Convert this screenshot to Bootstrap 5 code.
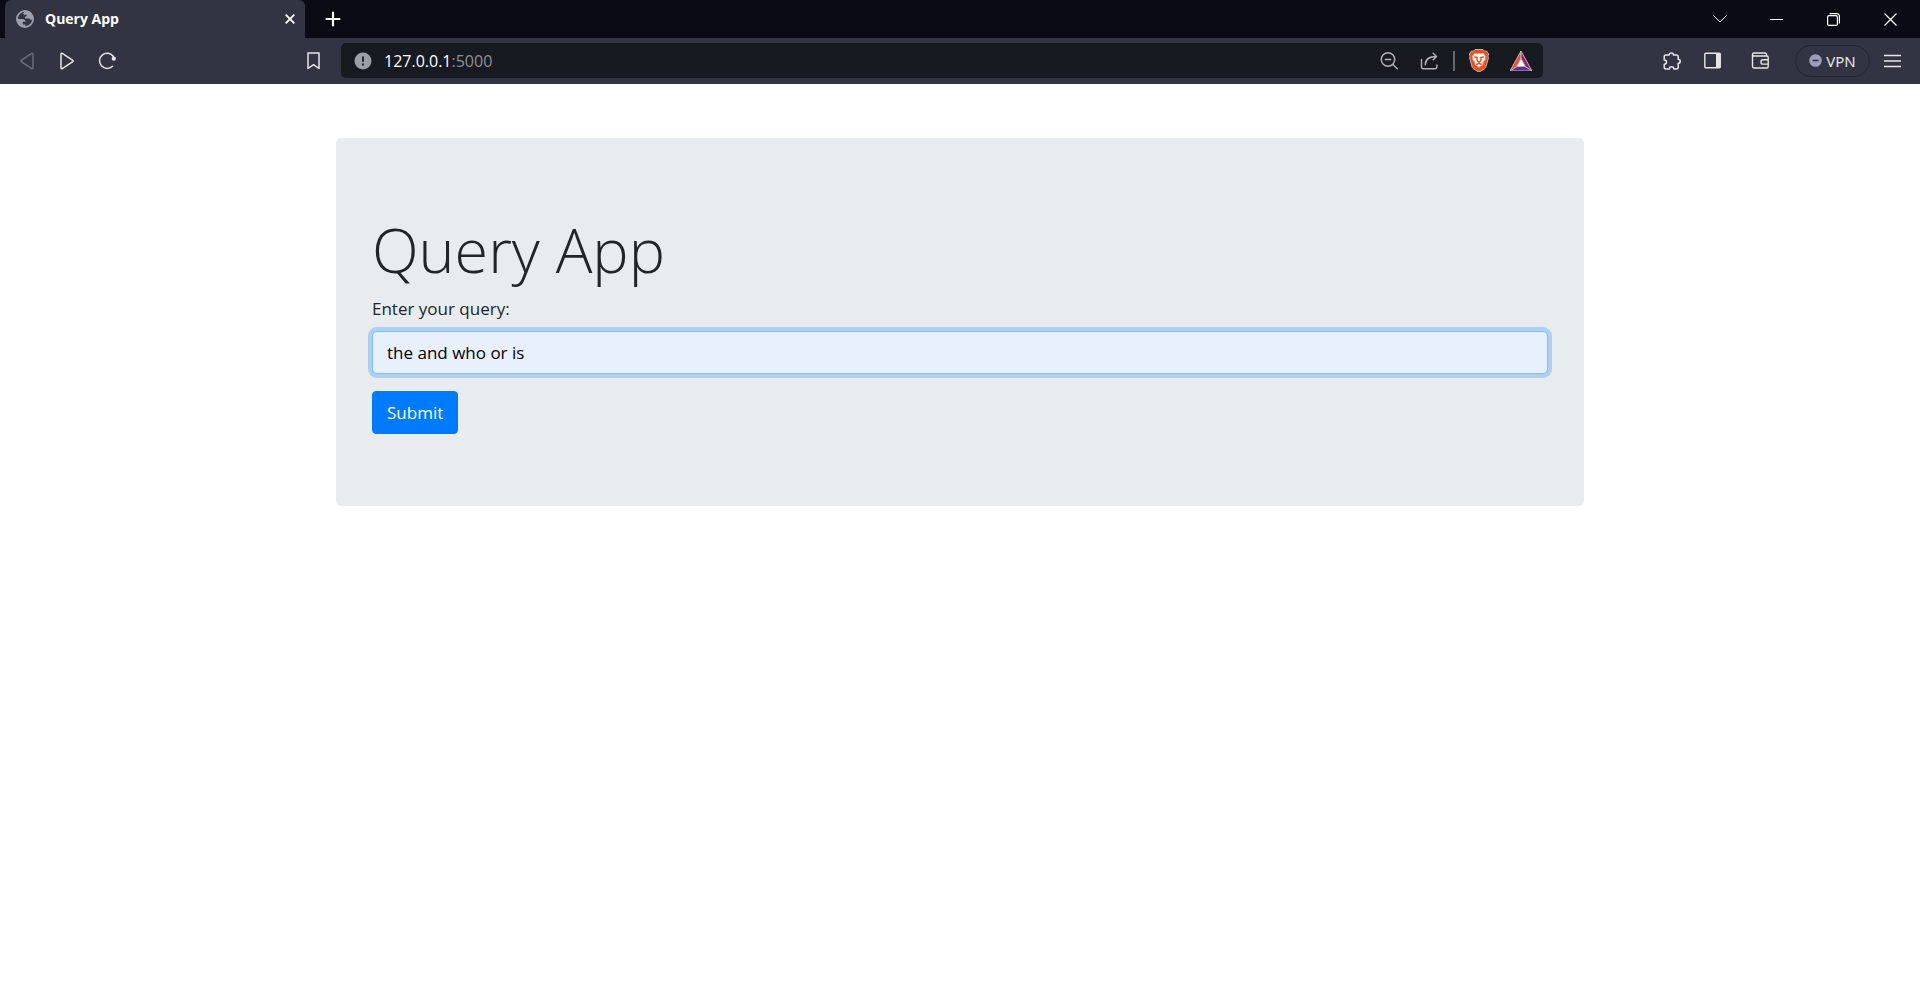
<!DOCTYPE html>
<html lang="en">
<head>
<meta charset="utf-8">
<meta name="viewport" content="width=device-width, initial-scale=1">
<title>Query App</title>
<link href="https://cdn.jsdelivr.net/npm/bootstrap@5.3.0/dist/css/bootstrap.min.css" rel="stylesheet">
<style>
  body { font-family: "Open Sans", "Noto Sans", sans-serif; color: #212529; background: #fff; }
  svg { display: block; flex: none; fill: none; stroke: currentColor; }
  .tab-strip { height: 38px; background: #0a0b14; color: #fff; padding: 0 1px 0 5px; }
  .page-tab { width: 300px; height: 38px; background: #323443; border-radius: 6px 6px 0 0; padding: 0 4px 0 11px; font: 700 14px/20px "Open Sans", sans-serif; }
  .tab-title { margin-left: 11px; }
  .toolbar { height: 46px; background: #323443; color: #e6e6e8; padding: 0 8px 1px 7px; }
  .tool-btn, .win-btn { border: 0; padding: 0; background: none; color: inherit; display: flex; align-items: center; justify-content: center; flex: none; }
  .tool-btn { width: 40px; height: 32px; }
  .tool-btn.close-tab { width: 22px; }
  .tool-btn.wide { width: 42px; }
  .tool-btn:disabled { color: #6d6f7c; }
  .win-btn { width: 57px; height: 38px; }
  .nav-tools { width: 334px; }
  .side-tools { width: 369px; }
  .address { height: 35px; background: #181a21; border-radius: 5px; padding: 0 1px 0 13px; color: #b4b5b8; }
  .address-text { font: 16px/24px "Open Sans", sans-serif; color: #8e9095; }
  .address-text b { font-weight: 400; color: #fff; }
  .divider { width: 2px; height: 20px; background: #66686d; margin: 0 3px 0 4px; }
  .vpn { width: 75px; height: 32px; border: 1px solid #232532; border-radius: 16px; background: none; color: #e6e6e8; font: 15px/20px "Noto Sans", sans-serif; padding: 0; margin: 0 2px 0 15px; }
  .page-box { max-width: 1248px; margin: 54px auto 0; padding: 72px 36px; border-radius: 5px; background: #e9ecef; font-size: 17px; line-height: 27px; }
  .page-box h1 { font-size: 61px; line-height: 80px; font-weight: 300; margin-bottom: 5px; }
  .page-box label { margin-bottom: 9px; display: block; }
  .page-box .form-control { height: 43px; padding: 6px 14px; font-size: 17px; line-height: 27px; border-radius: 5px; color: #000; background: #e8f0fe; border-color: #80bdff; box-shadow: 0 0 0 4px rgba(0,123,255,.25); margin-bottom: 17px; }
  .page-box .btn { height: 43px; padding: 6px 14px; font-size: 17px; line-height: 27px; border-radius: 4px; --bs-btn-bg: #007bff; --bs-btn-border-color: #007bff; display: block; }
</style>
</head>
<body>
<header>
  <div class="tab-strip d-flex align-items-center">
    <div class="page-tab d-flex align-items-center">
      <svg width="18" height="18" viewBox="0 0 18 18"><circle cx="9" cy="9" r="8.100" stroke="#9c9eaa" stroke-width="1.800"/><path d="M8.700 1.500Q7.200 2.300 7.200 4q0 .8 1.300.8h2.300q0 1.900-1.800 2v1.700h3.800q1.700 0 1.900 1.800l2.200-1.200Q17.500 3 12 .8zM.8 9h5.500q3 .1 3.200 2.800H6.800v2.600h2.700v2.800Q1 17 .8 9z" fill="#9c9eaa" stroke="none"/></svg>
      <span class="tab-title flex-grow-1">Query App</span>
      <button class="tool-btn close-tab" aria-label="Close tab"><svg width="10" height="10" viewBox="0 0 10 10" stroke-width="1.800"><path d="M.7.7l8.600 8.600M9.300.7L.7 9.300"/></svg></button>
    </div>
    <button class="tool-btn ms-2" aria-label="New tab"><svg width="16" height="16" viewBox="0 0 16 16" stroke-width="2.200" stroke-linecap="round"><path d="M8 1.500v13M1.500 8h13"/></svg></button>
    <div class="d-flex ms-auto">
      <button class="win-btn" aria-label="Search tabs"><svg width="14" height="8" viewBox="0 0 14 8"><path d="M.5.5L7 7 13.500.5"/></svg></button>
      <button class="win-btn" aria-label="Minimize"><svg width="13" height="1" viewBox="0 0 13 1"><path d="M0 .5h13"/></svg></button>
      <button class="win-btn" aria-label="Restore"><svg width="13" height="13" viewBox="0 0 13 13" stroke-width="1.200"><rect x=".6" y="2.600" width="9.800" height="9.800" rx="1.500"/><path d="M2.600.6H10A2.400 2.400 0 0 1 12.400 3v7.400"/></svg></button>
      <button class="win-btn" aria-label="Close"><svg width="13" height="13" viewBox="0 0 13 13" stroke-width="1.200"><path d="M.5.5l12 12M12.500.5l-12 12"/></svg></button>
    </div>
  </div>
  <div class="toolbar d-flex align-items-center">
    <div class="nav-tools d-flex">
      <button class="tool-btn" disabled aria-label="Back"><svg width="14" height="18" viewBox="0 0 14 18" stroke-width="1.400" stroke-linejoin="round"><path d="M13 2v14a.8.8 0 0 1-1.300.6L1.200 9.600a.8.8 0 0 1 0-1.200l10.500-7A.8.8 0 0 1 13 2z"/></svg></button>
      <button class="tool-btn" aria-label="Forward"><svg width="14" height="18" viewBox="0 0 14 18" stroke-width="1.500" stroke-linejoin="round"><path d="M1 2v14a.8.8 0 0 0 1.300.6l10.500-7a.8.8 0 0 0 0-1.200l-10.500-7A.8.8 0 0 0 1 2z"/></svg></button>
      <button class="tool-btn" aria-label="Reload"><svg width="18" height="18" viewBox="0 0 18 18" stroke-width="1.500"><path d="M14.500 14.200A7.600 7.600 0 1 1 15.400 4.500l.7 1.500" stroke-linecap="round"/><circle cx="15.800" cy="6.700" r="2.100" fill="currentColor" stroke="none"/></svg></button>
      <button class="tool-btn ms-auto" aria-label="Bookmark"><svg width="13" height="18" viewBox="0 0 13 18" stroke-width="1.500"><path d="M1 1h11v15.500L6.500 12.700 1 16.500z" stroke-linejoin="round"/></svg></button>
      <span class="ps-2"></span>
    </div>
    <div class="address d-flex align-items-center flex-grow-1">
      <svg width="18" height="18" viewBox="0 0 18 18"><circle cx="9" cy="9" r="8.500" fill="#9c9ea7" stroke="none"/><path d="M9 4.500v5.300M9 11.500v2" stroke="#181a21" stroke-width="1.800"/></svg>
      <span class="address-text ms-2 ps-1 flex-grow-1"><b>127.0.0.1</b>:5000</span>
      <button class="tool-btn" aria-label="Zoom"><svg width="18" height="18" viewBox="0 0 18 18" stroke-width="1.400" stroke-linecap="round"><circle cx="8" cy="7.500" r="6.700"/><path d="M5.300 7.500h5.400M12.900 12.400l4.400 4.400"/></svg></button>
      <button class="tool-btn" aria-label="Share"><svg width="18" height="18" viewBox="0 0 18 18" stroke-width="1.400" stroke-linecap="round" stroke-linejoin="round"><path d="M1.500 7.500V15a1.700 1.700 0 0 0 1.700 1.700h12A1.700 1.700 0 0 0 16.900 15v-2M5.300 12.700c0-5.500 3-8.200 11-8.200M13.200 1.300l3.300 3.200-3.300 3.200"/></svg></button>
      <span class="divider"></span>
      <button class="tool-btn wide" aria-label="Brave Shields"><svg width="20" height="23" viewBox="0 0 20 23" stroke="none"><path d="M6 .5h8l1.500 1.700 2-.2L19.700 5l-.8 2 .5 2-2.600 9.300q-.5 1-1.500 1.700L11 22.600q-1 .6-2 0L4.700 20q-1-.7-1.500-1.700L.6 9l.5-2-.8-2 2.200-3 2 .2z" fill="#fb4a0c"/><path d="M5.500 4.300l2.800.6 1.700-.5 1.700.5 2.800-.6L16.600 7.500l-.6 1.500.2 1.600-2.300 3.200.1 1.800L10 18.300l-4-2.700.1-1.800-2.300-3.200L4 9l-.6-1.500z" fill="#fff"/><path d="M5.300 7.800l2.900.7-.3 1.700.6 1.800L10 13l1.500-1 .6-1.800-.3-1.700 2.900-.7M10 13v1.500M7.300 15.700l2.700-1.400 2.700 1.400" fill="none" stroke="#fb4a0c" stroke-width="1.400"/></svg></button>
      <button class="tool-btn wide" aria-label="Brave Rewards"><svg width="22" height="20" viewBox="0 0 22 20" stroke="none"><path d="M11 0L0 20l7-4.500L11 8z" fill="#ff4724"/><path d="M11 0v8l4 7.500 7 4.500z" fill="#9e1f63"/><path d="M0 20l7-4.500h8l7 4.500z" fill="#662d91"/><path d="M11 7.500l4.300 8H6.700z" fill="#fff"/></svg></button>
    </div>
    <div class="side-tools d-flex align-items-center justify-content-end">
      <button class="tool-btn" aria-label="Extensions"><svg width="18" height="18" viewBox="0 0 18 18" stroke-width="1.500" stroke-linejoin="round"><path d="M1.200 5Q1.200 3 3 3h3.200C6.200 1.700 7 .9 8.300.9s2.200.8 2.200 2.100h2.700q2 0 2 2v2.200c1.300 0 2 .9 2 2s-.7 2.100-2 2.100V15q0 2-2 2h-2.400c0-1.400-.9-2.200-2.200-2.200S6.400 15.600 6.400 17H3q-1.800 0-1.800-2v-2.800c1.400 0 2.300-.9 2.300-2.200s-.9-2.100-2.300-2.100z"/></svg></button>
      <button class="tool-btn" aria-label="Sidebar"><svg width="17" height="17" viewBox="0 0 17 17" stroke-width="1.400"><rect x=".8" y="1.300" width="15.400" height="14.400" rx="1"/><path d="M12 1h4.500v15H12z" fill="currentColor" stroke="none"/></svg></button>
      <button class="tool-btn ms-2" aria-label="Wallet"><svg width="18" height="17" viewBox="0 0 18 17" stroke-width="1.400" stroke-linejoin="round"><path d="M15.500 4V2.500Q15.500 1 14 1H3Q1.500 1 1.500 2.500v11.800Q1.500 16 3 16h12.800q1.400 0 1.400-1.500v-9q0-1.500-1.400-1.500H3Q1.500 4 1.500 2.500M17.200 7.700h-5.500q-1.700 0-1.700 2.200t1.700 2.200h5.500z"/></svg></button>
      <button class="vpn d-flex align-items-center justify-content-center gap-1"><svg width="13" height="13" viewBox="0 0 13 13"><circle cx="6.500" cy="6.500" r="6.300" fill="#9c9db8" stroke="none"/><path d="M3.500 6.500h6" stroke="#323443" stroke-width="1.600"/></svg>VPN</button>
      <button class="tool-btn" aria-label="Menu"><svg width="17" height="14" viewBox="0 0 17 14" stroke-width="1.400"><path d="M0 1.500h17M0 7h17M0 12.500h17"/></svg></button>
    </div>
  </div>
</header>
<main class="page-box">
  <h1>Query App</h1>
  <form>
    <label for="query">Enter your query:</label>
    <input class="form-control" type="text" id="query" value="the and who or is">
    <button class="btn btn-primary" type="submit">Submit</button>
  </form>
</main>
<script src="https://cdn.jsdelivr.net/npm/bootstrap@5.3.0/dist/js/bootstrap.bundle.min.js"></script>
</body>
</html>
